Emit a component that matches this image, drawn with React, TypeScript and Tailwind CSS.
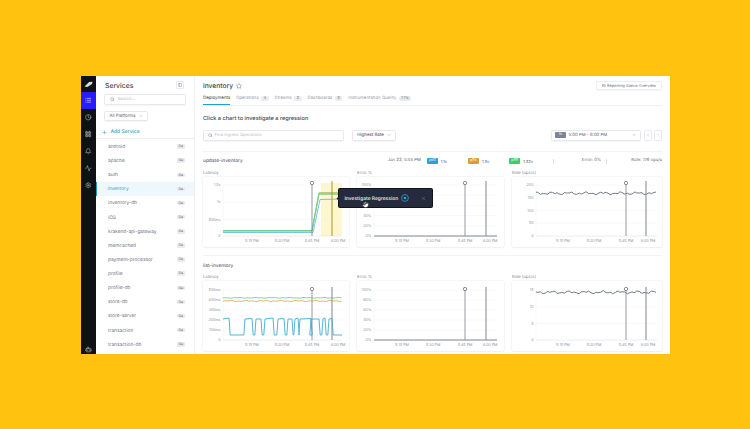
import React from "react";
import { List, Clock, LayoutGrid, Bell, Activity, Settings, Bot, Search, ChevronDown, ChevronLeft, ChevronRight, Plus, Star, PanelLeft, X, Hand, Rows3 } from "lucide-react";

const services = ["android","apache","auth","inventory","inventory-db","iOS","krakend-api-gateway","memcached","payment-processor","profile","profile-db","store-db","store-server","transaction","transaction-db"];

type Tick = { y: number; label: string };
type Cfg = { left: number; right: number; ticks: Tick[]; xs: number[]; marker: number; cy: number; line2: number };

function wiggle(seed: number, from: number, to: number, base: number, amp: number) {
  const pts: string[] = [];
  for (let x = from; x <= to; x += 1.5) {
    const v = Math.sin(x * 0.9 + seed) * 0.5 + Math.sin(x * 0.37 + seed * 2) * 0.6 + Math.sin(x * 1.7 + seed * 3) * 0.25;
    pts.push(`${x},${(base + v * amp).toFixed(2)}`);
  }
  return pts.join(" ");
}

function Chart({ cfg, children, band }: { cfg: Cfg; children?: React.ReactNode; band?: boolean }) {
  const xl = ["5:15 PM", "5:30 PM", "5:45 PM", "6:00 PM"];
  const base = cfg.ticks[cfg.ticks.length - 1].y;
  return (
    <svg width="100%" height="100%" viewBox="0 0 146 70" preserveAspectRatio="xMinYMin" className="block">
      {band && <rect x={118} y={6} width={21} height={53} fill="#fdf6cf" />}
      {cfg.ticks.map((t, i) => (
        <g key={i}>
          <line x1={cfg.left} x2={cfg.right} y1={t.y} y2={t.y} stroke={i === cfg.ticks.length - 1 ? "#d5d8de" : "#f0f1f4"} strokeWidth={0.5} />
          {t.label && <text x={cfg.left - 2.5} y={t.y + 1.3} textAnchor="end" fontSize={3.7} fill="#8b91a0">{t.label}</text>}
        </g>
      ))}
      <line x1={cfg.left} x2={cfg.left} y1={cfg.ticks[0].y} y2={base} stroke="#eceef1" strokeWidth={0.5} />
      {cfg.xs.map((x, i) => (
        <text key={i} x={x} y={65} textAnchor="middle" fontSize={3.7} fill="#8b91a0">{xl[i]}</text>
      ))}
      {children}
      <line x1={cfg.marker} x2={cfg.marker} y1={cfg.cy} y2={base} stroke="#7c8190" strokeWidth={0.8} />
      <circle cx={cfg.marker} cy={cfg.cy} r={1.7} fill="#fff" stroke="#5d6373" strokeWidth={0.7} />
      <line x1={cfg.line2} x2={cfg.line2} y1={cfg.cy - 2} y2={base} stroke={band ? "#a89a1e" : "#8a8f9b"} strokeWidth={band ? 1 : 1.1} />
    </svg>
  );
}

const E1: Cfg = { left: 17, right: 140, ticks: [8, 18.2, 28.4, 38.6, 48.8, 59].map((y, i) => ({ y, label: i === 1 || i === 2 ? "" : `${100 - i * 20}%` })), xs: [45, 76, 108, 133], marker: 108, cy: 6, line2: 129 };
const L1: Cfg = { left: 20, right: 139, ticks: [{ y: 8, label: "1.5s" }, { y: 25, label: "1s" }, { y: 42.5, label: "500ms" }, { y: 59, label: "0" }], xs: [49, 79, 109, 135], marker: 109, cy: 6, line2: 129 };
const R1: Cfg = { left: 24, right: 145, ticks: [{ y: 8, label: "200" }, { y: 21, label: "150" }, { y: 33.5, label: "100" }, { y: 46, label: "50" }, { y: 59, label: "0" }], xs: [51, 82, 114, 136], marker: 114, cy: 6, line2: 134 };
const L2: Cfg = { left: 20, right: 139, ticks: [9, 19, 29, 39, 49, 59].map((y, i) => ({ y, label: i === 5 ? "0" : `${500 - i * 100}ms` })), xs: [49, 79, 109, 135], marker: 109, cy: 8, line2: 129 };
const E2: Cfg = { ...E1, ticks: [9, 19, 29, 39, 49, 59].map((y, i) => ({ y, label: `${100 - i * 20}%` })), cy: 8 };
const R2: Cfg = { ...R1, ticks: [{ y: 9, label: "15" }, { y: 26, label: "10" }, { y: 42.6, label: "5" }, { y: 59, label: "0" }], cy: 8 };

const highs: [number, number][] = [[20, 26], [42, 49], [53, 58], [62, 70], [75, 81], [85, 89], [92, 95], [97, 108], [108, 116], [120, 122], [126, 129]];
function squarePath() {
  let d = `M20,38`;
  highs.forEach(([a, b], i) => {
    if (i > 0) d += ` L${a - 1.2},54 L${a},38`;
    d += ` L${b},${37 + (i % 3) * 0.5} L${b + 1.2},54`;
  });
  return d + ` L139,54`;
}

function Metric({ label, value, cls }: { label: string; value: string; cls: string }) {
  return (
    <div className="flex items-center gap-[3px]">
      <span className={`${cls} w-[11px] h-[5.5px] rounded-[1px] text-white text-[3.6px] leading-[5.5px] text-center`}>{label}</span>
      <span className="pt-[1px] text-[4px] text-[#5d6373]">{value}</span>
    </div>
  );
}

function CardCell({ label, children }: { label: string; children: React.ReactNode }) {
  return (
    <div className="flex flex-col min-w-0">
      <div className="h-[8px] text-[4.2px] leading-[9px] text-[#7d8391]">{label}</div>
      <div className="h-[70px] bg-white rounded-[2px] shadow-[0_0_0_0.5px_#eff0f3,0_0.5px_1.5px_rgba(30,40,60,0.08)] overflow-hidden">
        {children}
      </div>
    </div>
  );
}

function Tab({ label, n, active, w }: { label: string; n?: string; active?: boolean; w?: string }) {
  return (
    <div className={`h-full pb-[1.5px] flex items-center gap-[2.5px] border-b ${active ? "border-[#1e9fd8] text-[#3d4351]" : "border-transparent text-[#9aa0ad]"}`}>
      <span className="pt-[2.5px] text-[4.4px]">{label}</span>
      {n && <span className={`${w ?? "w-[7.5px]"} h-[4.5px] rounded-[2px] bg-[#e9ebef] text-[3.6px] leading-[4.5px] text-center text-[#5d6373]`}>{n}</span>}
    </div>
  );
}

export default function App() {
  return (
    <div className="w-[750px] h-[429px] bg-[#ffc20e] pl-[81px] pt-[76px] overflow-hidden [text-rendering:geometricPrecision]" style={{ fontFamily: "Inter, 'Liberation Sans', sans-serif" }}>
      <div className="relative w-[589px] h-[278px] bg-white flex overflow-hidden">
        {/* Rail */}
        <div className="w-[15px] h-full bg-[#0f1114] flex flex-col items-center text-[#b9bcc4]">
          <div className="h-[16px] w-full flex items-center justify-center">
            <svg width="9" height="7" viewBox="0 0 9 7"><path d="M0.5 5.5 L5 1 L8.5 0.8 L8 3 L3.5 6 Z" fill="#d8dade" /><path d="M1 3.5 L4.5 1.2" stroke="#0f1114" strokeWidth="0.5" /></svg>
          </div>
          <div className="h-[17px] w-full bg-[#2a1cff] flex items-center justify-center text-white"><List size={6.5} strokeWidth={2} /></div>
          <div className="h-[17px] w-full flex items-center justify-center"><Clock size={6.5} strokeWidth={2} /></div>
          <div className="h-[17px] w-full flex items-center justify-center"><LayoutGrid size={6.5} strokeWidth={2.6} /></div>
          <div className="h-[17px] w-full flex items-center justify-center"><Bell size={6.5} strokeWidth={2} /></div>
          <div className="h-[17px] w-full flex items-center justify-center"><Activity size={6.5} strokeWidth={2} /></div>
          <div className="h-[17px] w-full flex items-center justify-center"><Settings size={6.5} strokeWidth={2} /></div>
          <div className="mt-auto h-[9px] w-full flex items-center justify-center mb-[0.5px]"><Bot size={7} strokeWidth={2} /></div>
        </div>

        {/* Services */}
        <div className="w-[99px] h-full border-r border-[#eef0f2] flex flex-col overflow-hidden">
          <div className="h-[18px] shrink-0 pl-[9px] pr-[10px] flex items-center justify-between">
            <span className="pt-[2px] text-[6.8px] font-medium text-[#3d4351]">Services</span>
            <span className="w-[8px] h-[8px] border border-[#e6e8ec] rounded-[1px] flex items-center justify-center text-[#6c7280]"><PanelLeft size={4} /></span>
          </div>
          <div className="mx-[8px] h-[11px] shrink-0 border border-[#e6e8ec] rounded-[1.5px] flex items-center pl-[5px] gap-[3px] text-[#6c7280] shadow-[0_0.5px_1px_rgba(30,40,60,0.05)]">
            <Search size={4.5} />
            <span className="pt-[2px] text-[4.2px] text-[#b3b8c2]">Search...</span>
          </div>
          <div className="mx-[8px] mt-[6px] h-[10px] w-[44px] shrink-0 border border-[#e6e8ec] rounded-[1.5px] flex items-center justify-center gap-[3px] text-[#5d6373] shadow-[0_0.5px_1px_rgba(30,40,60,0.05)]">
            <span className="pt-[2px] text-[4.4px]">All Platforms</span>
            <ChevronDown size={4} />
          </div>
          <div className="h-[18px] shrink-0 border-b border-[#eef0f2] pl-[5.5px] pt-[5px] flex items-center gap-[4px] text-[#3aa0cc]">
            <Plus size={5} strokeWidth={2.5} />
            <span className="pt-[2px] text-[5px] font-medium">Add Service</span>
          </div>
          <div className="flex flex-col pt-[0.5px]">
            {services.map((s) => (
              <div key={s} className={`h-[14.13px] shrink-0 flex items-center justify-between pr-[9px] ${s === "inventory" ? "bg-[#eef8fc] border-l-[1.5px] border-[#1c9cc6] pl-[10.5px] text-[#3aa0cc]" : "pl-[12px] text-[#6c7280]"}`}>
                <span className="pt-[2px] text-[4.8px]">{s}</span>
                <span className="w-[8.5px] h-[4.5px] rounded-[1px] bg-[#e9ebef] text-[3.4px] leading-[4.5px] text-center text-[#5d6373]">Go</span>
              </div>
            ))}
          </div>
        </div>

        {/* Main */}
        <div className="relative flex-1 min-w-0 px-[8px] flex flex-col">
          <div className="h-[19px] shrink-0 flex items-center">
            <span className="pt-[1px] text-[6.7px] font-medium text-[#3d4351]">inventory</span>
            <Star size={6} className="ml-[3px] text-[#6c7280]" />
            <div className="ml-auto w-[66px] h-[8.5px] border border-[#eceef1] rounded-[1.5px] flex items-center justify-center gap-[1.5px] text-[#6c7280] shadow-[0_0.5px_1px_rgba(30,40,60,0.05)]">
              <Rows3 size={3.6} />
              <span className="pt-[1.5px] text-[3.9px]">Reporting Status Overview</span>
            </div>
          </div>
          <div className="h-[10.5px] shrink-0 border-b border-[#eef0f2] flex items-center gap-[5.8px]">
            <Tab label="Deployments" active />
            <Tab label="Operations" n="5" />
            <Tab label="Streams" n="2" />
            <Tab label="Dashboards" n="0" />
            <Tab label="Instrumentation Quality" n="77%" w="w-[12px]" />
          </div>
          <div className="h-[24px] shrink-0 flex items-center">
            <span className="pt-[2.5px] text-[5.6px] font-medium text-[#3d4351]">Click a chart to investigate a regression</span>
          </div>
          <div className="h-[11px] shrink-0 flex items-center">
            <div className="w-[141px] h-full border border-[#e6e8ec] rounded-[1.5px] flex items-center pl-[3.5px] gap-[2.5px] text-[#6c7280] shadow-[0_0.5px_1px_rgba(30,40,60,0.05)]">
              <Search size={4.5} />
              <span className="pt-[2px] text-[4.2px] text-[#b3b8c2]">Find Ingress Operations</span>
            </div>
            <div className="ml-[8px] w-[44px] h-full border border-[#e6e8ec] rounded-[1.5px] flex items-center justify-center gap-[3px] text-[#5d6373] shadow-[0_0.5px_1px_rgba(30,40,60,0.05)]">
              <span className="pt-[2px] text-[4.4px] font-medium">Highest Rate</span>
              <ChevronDown size={4} />
            </div>
            <div className="ml-auto w-[90px] h-full border border-[#e6e8ec] rounded-[1.5px] flex items-center pl-[3px] pr-[4px] text-[#5d6373] shadow-[0_0.5px_1px_rgba(30,40,60,0.05)]">
              <span className="w-[10.5px] h-[5.5px] rounded-[1px] bg-[#7d8399] text-white text-[3.6px] leading-[5.5px] text-center">1h</span>
              <span className="ml-[3px] pt-[1.5px] text-[4.3px]">5:00 PM - 6:00 PM</span>
              <ChevronDown size={4} className="ml-auto" />
            </div>
            <div className="ml-[3px] w-[8px] h-full border border-[#e6e8ec] rounded-[1.5px] flex items-center justify-center text-[#8b91a0]"><ChevronLeft size={4} /></div>
            <div className="ml-[2px] w-[8px] h-full border border-[#e6e8ec] rounded-[1.5px] flex items-center justify-center text-[#8b91a0]"><ChevronRight size={4} /></div>
          </div>

          <div className="mt-[10px] h-[18px] shrink-0 border-t border-[#f2f3f5] pt-[1px] flex items-center justify-between">
            <span className="pt-[2.5px] text-[4.8px] font-medium text-[#5d6373]">update-inventory</span>
            <div className="flex items-center pt-[1px] text-[4.3px] text-[#5d6373]">
              <span className="w-[39px] pt-[1px]">Jan 22, 5:55 PM</span>
              <Metric label="p50" value="1.1s" cls="bg-[#2e9fd9]" />
              <div className="w-[21px]" />
              <Metric label="p95" value="1.3s" cls="bg-[#e09a35]" />
              <div className="w-[20px]" />
              <Metric label="p99" value="1.32s" cls="bg-[#3ecb6b]" />
              <div className="ml-[20px] w-px h-[5px] bg-[#dfe1e6]" />
              <span className="ml-[28px] pt-[1px]">Error: 0%</span>
              <div className="ml-[5px] w-px h-[5px] bg-[#dfe1e6]" />
              <span className="ml-[24px] pt-[1px]">Rate: 176 ops/s</span>
            </div>
          </div>
          <div className="grid grid-cols-[146px_147px_150px] gap-x-[8px] shrink-0">
            <CardCell label="Latency">
              <Chart cfg={L1} band>
                <path d="M20,55.5 L110,55.5 L117,22.5 L139,22" fill="none" stroke="#5cb5dc" strokeWidth={0.8} />
                <path d="M20,54 L109,54 L116,15.8 L139,15.8" fill="none" stroke="#8fa63c" strokeWidth={0.8} />
                <path d="M20,53.7 L109,53.7 L116,17 L139,17" fill="none" stroke="#79d08a" strokeWidth={1.3} />
              </Chart>
            </CardCell>
            <CardCell label="Error %">
              <Chart cfg={E1}>
                <line x1={17} x2={140} y1={59} y2={59} stroke="#6d7280" strokeWidth={0.8} />
              </Chart>
            </CardCell>
            <CardCell label="Rate (ops/s)">
              <Chart cfg={R1}>
                <polyline points={wiggle(1.2, 24, 145, 16.3, 1.3)} fill="none" stroke="#4f5563" strokeWidth={0.8} />
              </Chart>
            </CardCell>
          </div>

          <div className="mt-[8.5px] h-[18px] shrink-0 border-t border-[#f2f3f5] pt-[1.5px] flex items-center">
            <span className="pt-[2.5px] text-[4.8px] font-medium text-[#5d6373]">list-inventory</span>
          </div>
          <div className="grid grid-cols-[146px_147px_150px] gap-x-[8px] shrink-0">
            <CardCell label="Latency">
              <Chart cfg={L2}>
                <polyline points={wiggle(2.1, 20, 139, 16.8, 0.35)} fill="none" stroke="#7fd3a4" strokeWidth={1} />
                <polyline points={wiggle(3.7, 20, 139, 20, 0.6)} fill="none" stroke="#e3b46e" strokeWidth={1} />
                <path d={squarePath()} fill="none" stroke="#52b6d8" strokeWidth={1} />
              </Chart>
            </CardCell>
            <CardCell label="Error %">
              <Chart cfg={E2}>
                <line x1={17} x2={140} y1={59} y2={59} stroke="#6d7280" strokeWidth={0.8} />
              </Chart>
            </CardCell>
            <CardCell label="Rate (ops/s)">
              <Chart cfg={R2}>
                <polyline points={wiggle(4.4, 24, 145, 11.3, 1.3)} fill="none" stroke="#4f5563" strokeWidth={0.8} />
              </Chart>
            </CardCell>
          </div>
        </div>

        {/* Tooltip */}
        <div className="absolute left-[257px] top-[112px] w-[95px] h-[20px] rounded-[1.5px] bg-[#252b3c] border border-[#10131a] flex items-center pl-[5.5px] pr-[6px] text-[#dfe1e7]">
          <span className="absolute -left-[2px] top-[8px] w-[3px] h-[3px] rotate-45 bg-[#252b3c]" />
          <span className="pt-[2.5px] text-[4.9px] font-semibold whitespace-nowrap">Investigate Regression</span>
          <svg width="8" height="8" viewBox="0 0 8 8" className="ml-[3px]">
            <circle cx="4" cy="4" r="3.4" fill="none" stroke="#2f9fd8" strokeWidth="0.8" />
            <circle cx="4" cy="4" r="1.3" fill="#2f9fd8" />
          </svg>
          <X size={5} className="ml-auto text-[#7d8391]" />
          <Hand size={7} fill="#fff" className="absolute left-[23px] top-[12px] text-[#222]" />
        </div>
      </div>
    </div>
  );
}
